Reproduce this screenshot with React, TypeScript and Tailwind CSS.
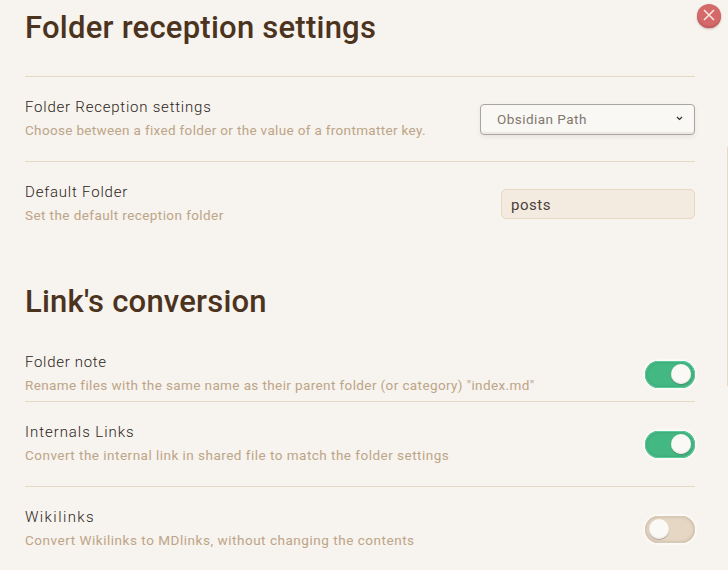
import type { ReactNode } from "react";

type RowProps = {
  name: string;
  nameClass: string;
  desc: string;
  descClass: string;
  className?: string;
  children: ReactNode;
};

function SettingRow({ name, nameClass, desc, descClass, className = "h-[85px] border-t border-[#e6d9c3] pt-[19px]", children }: RowProps) {
  return (
    <div className={`flex items-start justify-between ${className}`}>
      <div className="whitespace-nowrap">
        <div className={`h-[22px] text-[15px] leading-[22px] font-light text-[#2c2420] ${nameClass}`}>{name}</div>
        <div className={`mt-0.5 h-5 text-[13.5px] leading-5 text-[#bda588] ${descClass}`}>{desc}</div>
      </div>
      <div className="flex h-[46px] items-center">{children}</div>
    </div>
  );
}

function Toggle({ on }: { on: boolean }) {
  return (
    <div
      role="switch"
      aria-checked={on}
      className={`mt-[1px] flex h-[27px] w-[50px] items-start rounded-full px-1 pt-[3px] ${
        on
          ? "justify-end bg-[#43b883] shadow-[0_0_2px_2px_#fcfaf7,inset_0_0_0_1px_#5ccb9b,inset_0_0_3px_1px_#399d70]"
          : "justify-start bg-[#e5d7c4] shadow-[0_0_2px_2px_#fcfaf7,inset_0_0_0_1px_#d8cab6,inset_0_0_3px_1px_#c5b59f]"
      }`}
    >
      <div className="size-5 rounded-full bg-[#faf9f6] shadow-[0_1px_1px_rgba(70,60,50,0.35),inset_0_-1px_1px_#e9e5df]" />
    </div>
  );
}

export default function App() {
  return (
    <main className="relative h-[570px] w-[728px] overflow-hidden bg-[#f7f3ee] pr-[33px] pl-[25px] font-[Roboto,'Liberation_Sans',sans-serif]">
      <h1 className="flex h-[76px] items-start pt-2 text-[31px] leading-10 font-medium tracking-[0.24px] whitespace-nowrap text-[#4b331e]">
        Folder reception settings
      </h1>
      <SettingRow
        name="Folder Reception settings"
        nameClass="tracking-[0.78px]"
        desc="Choose between a fixed folder or the value of a frontmatter key."
        descClass="tracking-[0.335px]"
      >
        <div className="flex h-[31px] w-[215px] items-center justify-between rounded-[4px] border border-[#aaa5a4] bg-[#faf8f4] pr-[11px] pl-4 text-[13.5px] tracking-[0.46px] text-[#80776f] shadow-[0_2px_4px_rgba(60,50,40,0.08),inset_0_-2px_1px_#ebe8e3]">
          <span className="mt-[1px]">Obsidian Path</span>
          <svg className="-mt-0.5" width="7" height="5" viewBox="0 0 7 5" fill="none" stroke="#332d29" strokeWidth="1.2">
            <path d="M1 1l2.5 2.5L6 1" />
          </svg>
        </div>
      </SettingRow>
      <SettingRow name="Default Folder" nameClass="tracking-[0.8px]" desc="Set the default reception folder" descClass="tracking-[0.42px]">
        <div className="-mt-[1px] flex h-[30px] w-[194px] items-center rounded-[5px] border border-[#e8d8c1] bg-[#f3eae0] pt-[3px] pl-[9px] text-[15px] tracking-[0.5px] text-[#4b4039]">
          posts
        </div>
      </SettingRow>
      <h1 className="flex h-[100px] items-start pt-9 text-[31px] leading-10 font-medium tracking-[0.22px] whitespace-nowrap text-[#4b331e]">
        Link's conversion
      </h1>
      <SettingRow
        name="Folder note"
        nameClass="tracking-[0.7px]"
        desc={'Rename files with the same name as their parent folder (or category) "index.md"'}
        descClass="tracking-[0.39px]"
        className="h-[55px] pt-[5px]"
      >
        <Toggle on />
      </SettingRow>
      <SettingRow
        name="Internals Links"
        nameClass="tracking-[0.95px]"
        desc="Convert the internal link in shared file to match the folder settings"
        descClass="tracking-[0.48px]"
      >
        <Toggle on />
      </SettingRow>
      <SettingRow
        name="Wikilinks"
        nameClass="tracking-[1.4px]"
        desc="Convert Wikilinks to MDlinks, without changing the contents"
        descClass="tracking-[0.53px]"
      >
        <Toggle on={false} />
      </SettingRow>
      <button
        aria-label="Close"
        className="absolute top-1 left-[697px] flex size-6 items-center justify-center rounded-full bg-[#d4696a] shadow-[0_1px_2px_rgba(80,40,35,0.35),inset_0_-2px_1px_#c25d5c]"
      >
        <svg className="-mt-0.5" width="12" height="12" viewBox="0 0 12 12" fill="none" stroke="#f7e5df" strokeWidth="1.6">
          <path d="M1 1l10 10M11 1L1 11" />
        </svg>
      </button>
      <div className="absolute top-[147px] right-0 h-[239px] w-px bg-[#e6d9c6]" />
    </main>
  );
}
